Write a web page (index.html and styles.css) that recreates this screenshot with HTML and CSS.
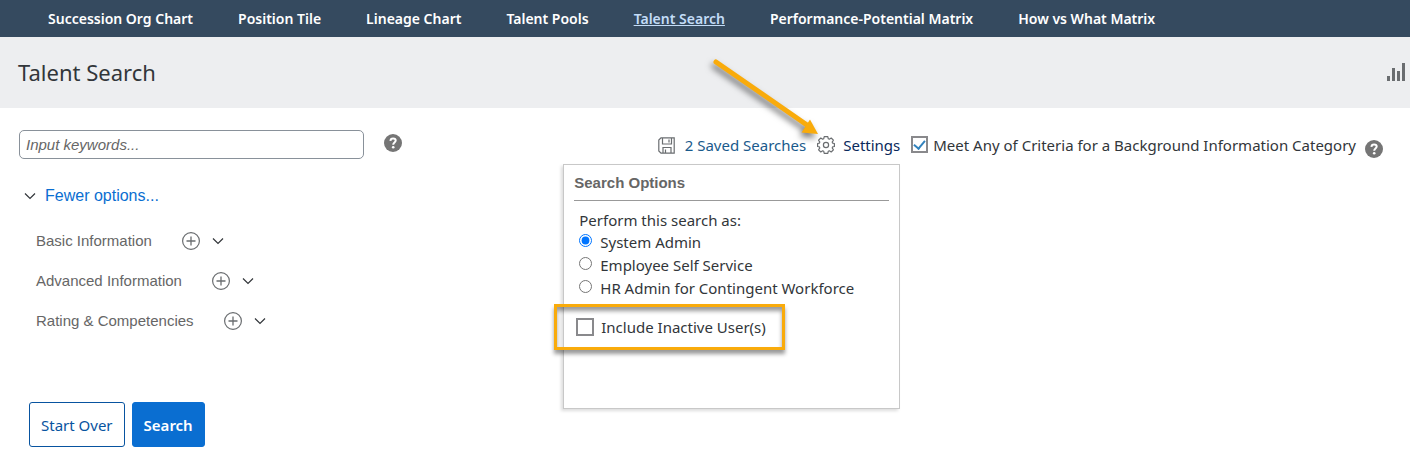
FILE: index.html
```html
<!DOCTYPE html>
<html lang="en">
<head>
<meta charset="utf-8">
<meta name="viewport" content="width=device-width, initial-scale=1">
<title>Talent Search</title>
<link rel="stylesheet" href="styles.css">
</head>
<body>
<svg class="symbols" aria-hidden="true">
  <symbol id="plus" viewBox="0 0 18 18"><circle cx="9" cy="9" r="8.400" fill="none" stroke="currentColor" stroke-width="1.2"/><path d="M9 4.500v9M4.500 9h9" stroke="currentColor" stroke-width="1.300"/></symbol>
  <symbol id="chevron" viewBox="0 0 12 12"><path d="M1 3.500l5 5 5-5" fill="none" stroke="currentColor" stroke-width="1.200"/></symbol>
  <symbol id="help" viewBox="0 0 18 18"><circle cx="9" cy="9" r="9" fill="currentColor"/><path d="M6.400 6.900C6.500 5.300 7.600 4.500 9.100 4.500c1.500 0 2.600.8 2.600 2.100 0 1.900-2.500 2-2.500 4.100" fill="none" stroke="#fff" stroke-width="2"/><circle cx="9.200" cy="13.300" r="1.300" fill="#fff"/></symbol>
</svg>
<nav class="tabs">
  <a href="#">Succession Org Chart</a>
  <a href="#">Position Tile</a>
  <a href="#">Lineage Chart</a>
  <a href="#">Talent Pools</a>
  <a href="#" class="active" aria-current="page">Talent Search</a>
  <a href="#">Performance-Potential Matrix</a>
  <a href="#">How vs What Matrix</a>
</nav>
<header class="title-bar">
  <h1>Talent Search</h1>
  <button class="icon-button" aria-label="Statistics"><svg class="stats" viewBox="0 0 19 18" fill="#6a6d70"><path d="M0 13h3v5H0zM5 5h3v13H5zM10 8h3v10h-3zM15 0h3v18h-3z"/></svg></button>
</header>
<main class="content">
  <form class="search">
    <div class="keyword-row">
      <input class="keywords" type="text" placeholder="Input keywords..." aria-label="Keywords">
      <button type="button" class="icon-button" aria-label="Keyword help"><svg class="help"><use href="#help"/></svg></button>
    </div>
    <button type="button" class="fewer"><svg class="chevron"><use href="#chevron"/></svg>Fewer options...</button>
    <div class="sections">
      <div class="section"><span>Basic Information</span><button type="button" class="icon-button" aria-label="Add basic information"><svg class="plus"><use href="#plus"/></svg></button><button type="button" class="icon-button" aria-label="Basic information menu"><svg class="chevron"><use href="#chevron"/></svg></button></div>
      <div class="section"><span>Advanced Information</span><button type="button" class="icon-button" aria-label="Add advanced information"><svg class="plus"><use href="#plus"/></svg></button><button type="button" class="icon-button" aria-label="Advanced information menu"><svg class="chevron"><use href="#chevron"/></svg></button></div>
      <div class="section"><span>Rating &amp; Competencies</span><button type="button" class="icon-button" aria-label="Add rating"><svg class="plus"><use href="#plus"/></svg></button><button type="button" class="icon-button" aria-label="Rating menu"><svg class="chevron"><use href="#chevron"/></svg></button></div>
    </div>
    <div class="actions">
      <button type="reset" class="button">Start Over</button>
      <button type="submit" class="button primary">Search</button>
    </div>
  </form>
  <div class="toolbar">
    <button class="tool saved"><svg class="save" viewBox="0 0 17 17" fill="none" stroke="#6a6d70" stroke-width="1.200"><path d="M3 .8h13.200v15.400H3L.8 14V3zM4.500 1v6h9V1M11 2.500v3M5 16v-5.500h8V16M7.500 12.500V16"/></svg>2 Saved Searches</button>
    <div class="settings">
      <button class="tool"><svg class="gear" viewBox="0 0 18 18" fill="none" stroke="#6a6d70" stroke-width="1.200" stroke-linejoin="round"><path d="M7.200.6h3.600l.5 2.200 1 .4 1.900-1.200 2.200 2.200-1.200 1.900.4 1 1.800.4v3l-1.800.4-.4 1 1.200 1.900-2.200 2.200-1.900-1.200-1 .4-.5 2.200H7.200l-.5-2.200-1-.4-1.900 1.200-2.200-2.200 1.200-1.900-.4-1-1.800-.4v-3l1.800-.4.4-1-1.200-1.900 2.200-2.200 1.900 1.200 1-.4z"/><circle cx="9" cy="9" r="2.600"/></svg>Settings</button>
      <div class="popup" role="dialog" aria-labelledby="options-title">
        <h2 id="options-title">Search Options</h2>
        <fieldset>
          <legend>Perform this search as:</legend>
          <label><input type="radio" name="role" checked>System Admin</label>
          <label><input type="radio" name="role">Employee Self Service</label>
          <label><input type="radio" name="role">HR Admin for Contingent Workforce</label>
        </fieldset>
        <label class="highlight"><input class="box" type="checkbox">Include Inactive User(s)</label>
      </div>
      <svg class="arrow" viewBox="0 0 110 80"><path d="M6 6L97 69" stroke="#f9ab0b" stroke-width="5" stroke-linecap="round"/><path d="M108 78L100 63.500 91.500 76.500z" fill="#f9ab0b"/></svg>
    </div>
    <label class="criteria"><input class="box" type="checkbox" checked>Meet Any of Criteria for a Background Information Category</label>
    <button class="icon-button criteria-help" aria-label="Criteria help"><svg class="help"><use href="#help"/></svg></button>
  </div>
</main>
</body>
</html>
```
FILE: styles.css
```css
* { box-sizing: border-box; }
body { margin: 0; background: #fff; color: #32363a; font: 15px/22px "Noto Sans", sans-serif; }
button, input { font: inherit; color: inherit; }
button { padding: 0; border: 0; background: none; cursor: pointer; }
svg { display: block; overflow: visible; }
.symbols { position: absolute; width: 0; height: 0; }

.tabs { display: flex; align-items: center; gap: 45px; height: 37px; padding: 0 48px; background: #354a5f; font-size: 14px; font-weight: 600; white-space: nowrap; }
.tabs a { color: #fff; text-decoration: none; }
.tabs .active { color: #c3dcf7; text-decoration: underline; }

.title-bar { display: flex; align-items: center; justify-content: space-between; height: 71px; padding: 0 4px 2px 18px; background: #edeef0; }
h1 { margin: 0; font-size: 22px; font-weight: 400; line-height: 28px; }
.stats { width: 19px; height: 18px; }

.content { display: flex; justify-content: space-between; padding: 22px 27px 16px 19px; }
.keyword-row { display: flex; gap: 20px; }
.keywords { width: 345px; height: 29px; padding: 0 6px; border: 1px solid #89919a; border-radius: 5px; font: 15px "Liberation Sans", sans-serif; }
.keywords::placeholder { color: #666; font-style: italic; opacity: 1; }
.help { width: 18px; height: 18px; color: #757575; }
.keyword-row .icon-button { height: 26px; }
.fewer { display: flex; align-items: center; gap: 9px; margin: 26px 0 0 5px; color: #0a6ed1; font: 16px/22px "Liberation Sans", sans-serif; }
.chevron { width: 12px; height: 12px; color: #32363a; }
.sections { padding: 14px 0 0 17px; color: #666; font: 15px/20px "Liberation Sans", sans-serif; }
.section { display: flex; align-items: center; height: 40px; }
.plus { width: 18px; height: 18px; color: #6a6d70; }
.section span { margin-right: 30px; }
.section .plus { margin-right: 12px; }
.actions { display: flex; gap: 7px; margin: 61px 0 0 10px; }
.button { height: 45px; padding: 0 11px; border: 1px solid #0854a0; border-radius: 3px; color: #0854a0; }
.primary { border-color: #0a6ed1; background: #0a6ed1; color: #fff; font-weight: 600; }

.toolbar { display: flex; align-items: center; height: 30px; white-space: nowrap; }
.tool { display: flex; align-items: center; gap: 8px; color: #0a2a5c; }
.saved { gap: 10px; margin-right: 11px; color: #1a5a8c; }
.save { width: 17px; height: 17px; }
.gear { width: 18px; height: 18px; }
.settings { position: relative; }
.box { flex: none; width: 18px; height: 18px; margin: 0; border: 2px solid #89898c; background: #fff; appearance: none; display: grid; place-items: center; }
.box:checked::before { content: ""; width: 5px; height: 9px; margin-bottom: 3px; border: solid #3182bd; border-width: 0 2px 2px 0; transform: rotate(40deg); }
.criteria { display: flex; align-items: center; gap: 5px; margin-left: 11px; }
.criteria .box { width: 17px; height: 17px; margin-bottom: 2px; }
.criteria-help { margin: 8px 0 0 9px; }

.popup { position: absolute; top: 30px; right: 0; width: 337px; height: 245px; padding: 7px 10px; border: 1px solid #c8c8c8; background: #fff; box-shadow: -2px 2px 3px #0002; }
h2 { margin: 0; padding-bottom: 6px; border-bottom: 1px solid #999; color: #666; font: bold 15px/22px "Liberation Sans", sans-serif; }
fieldset { margin: 0; padding: 8px 0 0 5px; border: 0; }
legend { float: left; width: 100%; padding: 0; }
fieldset label { display: flex; gap: 8px; clear: both; line-height: 23px; }
fieldset input { width: 13px; height: 13px; margin: 3px 0 0; }
.highlight { display: flex; align-items: center; gap: 7px; width: 231px; height: 46px; margin: 4px 0 0 -20px; padding-left: 19px; border: 3px solid #f9ab0b; box-shadow: 0 4px 4px #0006, inset 0 4px 4px #0006; }
.arrow { position: absolute; left: -107px; bottom: 20px; width: 110px; height: 80px; filter: drop-shadow(-2px 4px 3px #0008); pointer-events: none; }
```
